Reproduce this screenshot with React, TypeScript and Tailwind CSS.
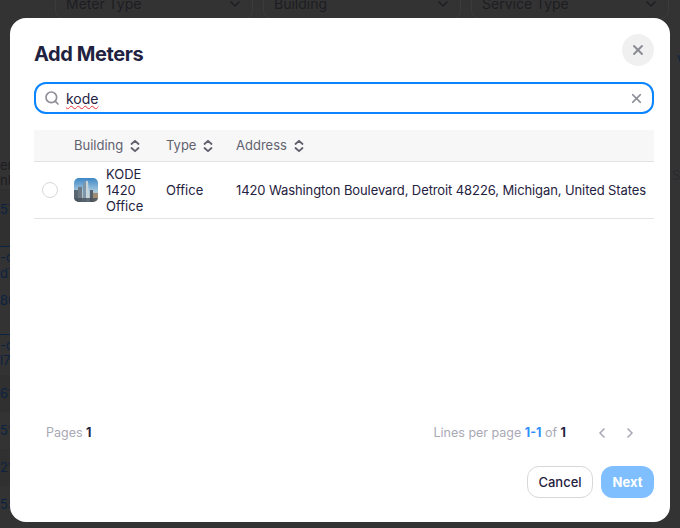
import { ChevronDown, ChevronLeft, ChevronRight, Search, X } from 'lucide-react';

const filters = ['Meter Type', 'Building', 'Service Type'];

function SortIcon() {
  return (
    <svg width="12" height="14" viewBox="0 0 12 14" fill="none" stroke="#5f5f6e" strokeWidth="1.8" strokeLinecap="round" strokeLinejoin="round" className="ml-[6px]">
      <path d="M2.5 5 6 1.8 9.5 5" />
      <path d="M2.5 9 6 12.2 9.5 9" />
    </svg>
  );
}

function BuildingThumb() {
  return (
    <svg width="24" height="24" viewBox="0 0 24 24" className="rounded-[5px] shrink-0">
      <defs>
        <linearGradient id="sky" x1="0" y1="0" x2="0" y2="1">
          <stop offset="0" stopColor="#3d86c6" />
          <stop offset="0.55" stopColor="#a5c8de" />
          <stop offset="1" stopColor="#c4b8a4" />
        </linearGradient>
      </defs>
      <rect width="24" height="24" fill="url(#sky)" />
      <path d="M0 12h4v12H0z" fill="#5a6672" />
      <path d="M4 9h4v15H4z" fill="#6d7a86" />
      <path d="M9 6l4-4 1 22H9z" fill="#7f95a8" />
      <path d="M12 3h2l1.5 21H12z" fill="#c8d4dc" />
      <path d="M16 12h3v12h-3z" fill="#56606a" />
      <path d="M19 15h5v9h-5z" fill="#a08c74" />
      <path d="M0 20h24v4H0z" fill="#47525c" opacity="0.8" />
    </svg>
  );
}

export default function App() {
  return (
    <div className="relative h-[528px] w-[680px] overflow-hidden bg-[#333333] font-['Inter',sans-serif]">
      {/* page behind the overlay */}
      <div className="-mt-[14px] flex gap-[10px] pl-[55px]">
        {filters.map((f) => (
          <div key={f} className="flex h-[34px] w-[198px] items-center justify-between rounded-[10px] border border-[#3b3b3b] pl-[10px] pr-[9px] pt-[1px] text-[14px] text-[#1d1d22]">
            {f}
            <ChevronDown size={16} color="#1d1d22" strokeWidth={2} />
          </div>
        ))}
      </div>
      <div className="flex justify-between">
        <div className="mt-[138px] flex flex-col text-[13px] text-[#0c2240]">
          <div className="h-[32px] border-b border-[#2f2f2f] leading-[15px] text-[#1d1d22]">er<br />nb</div>
          <div className="flex h-[56px] items-center bg-[#303030] pb-[16px]">57</div>
          <div className="h-[42px] border-t border-[#0c2240] pt-[2px] leading-[16px]">-c<br />d7</div>
          <div className="flex h-[46px] items-center pb-[20px]">80</div>
          <div className="h-[41px] border-t border-[#0c2240] pt-[3px] leading-[15px]">-d<br />l7</div>
          <div className="flex h-[37px] items-center bg-[#303030]">61</div>
          <div className="flex h-[37px] items-center">51</div>
          <div className="flex h-[37px] items-center bg-[#303030]">21</div>
          <div className="flex h-[38px] items-center">55</div>
        </div>
        <div className="w-[10px] overflow-hidden pt-[32px] text-[13px] leading-[16px]">
          <div className="ml-[7px] text-[#0c2240]">V</div>
          <div className="mt-[99px] ml-[2px] text-[#2a2a2e]">S</div>
        </div>
      </div>

      {/* modal */}
      <div className="absolute left-[10px] top-[18px] flex h-[504px] w-[660px] flex-col rounded-[16px] bg-white pl-[24px] pr-[16px] text-[#1f2240]">
        <div className="flex h-[64px] items-center justify-between pt-[8px]">
          <h2 className="text-[20px] font-bold tracking-[-0.4px]">Add Meters</h2>
          <button className="mt-[-8px] flex h-[32px] w-[32px] items-center justify-center rounded-full bg-[#f0f0f0]">
            <X size={16} color="#8a8a92" strokeWidth={2.8} />
          </button>
        </div>

        <div className="flex h-[32px] items-center rounded-[12px] border-2 border-[#0a84ff] pl-[8px] pr-[8px]">
          <Search size={16} color="#8e8e99" strokeWidth={2.5} />
          <span className="ml-[6px] flex-1 text-[14px] underline decoration-wavy decoration-[#e5383b] decoration-1">kode</span>
          <X size={15} color="#8a8a96" strokeWidth={2.8} />
        </div>

        <div className="mt-[16px] flex h-[32px] items-center border-b border-[#e3e3e3] bg-[#f7f7f7] pt-[1px] text-[13px] text-[#62626f]">
          <span className="ml-[40px] flex w-[92px] items-center">Building<SortIcon /></span>
          <span className="flex w-[70px] items-center">Type<SortIcon /></span>
          <span className="flex items-center">Address<SortIcon /></span>
        </div>

        <div className="flex h-[57px] items-center border-b border-[#e3e3e3] text-[13px] leading-[16px]">
          <span className="ml-[8px] h-[16px] w-[16px] rounded-full border border-[#d8d8d8]" />
          <div className="ml-[16px] flex w-[92px] items-center gap-[8px]">
            <BuildingThumb />
            <span className="w-[44px]">KODE 1420 Office</span>
          </div>
          <span className="w-[70px]">Office</span>
          <span className="whitespace-nowrap tracking-[-0.1px]">1420 Washington Boulevard, Detroit 48226, Michigan, United States</span>
        </div>

        <div className="flex-1" />

        <div className="flex h-[20px] items-center justify-between pl-[12px] pr-[16px] text-[12.5px] text-[#a9a9b5]">
          <span>Pages <b className="font-bold text-[#1f2240]">1</b></span>
          <div className="flex items-center">
            <span>Lines per page <b className="font-bold text-[#2f8fff]">1-1</b> of <b className="font-bold text-[#1f2240]">1</b></span>
            <ChevronLeft size={16} color="#a9a9b5" strokeWidth={2.5} className="ml-[28px]" />
            <ChevronRight size={16} color="#a9a9b5" strokeWidth={2.5} className="ml-[12px]" />
          </div>
        </div>

        <div className="mb-[24px] mt-[23px] flex justify-end gap-[8px]">
          <button className="h-[32px] w-[66px] rounded-[12px] border border-[#d8d8d8] pt-[1px] text-[13px] font-medium">Cancel</button>
          <button className="h-[32px] w-[53px] rounded-[12px] bg-[#7fbfff] pt-[1px] text-[13px] font-bold text-white">Next</button>
        </div>
      </div>
    </div>
  );
}
